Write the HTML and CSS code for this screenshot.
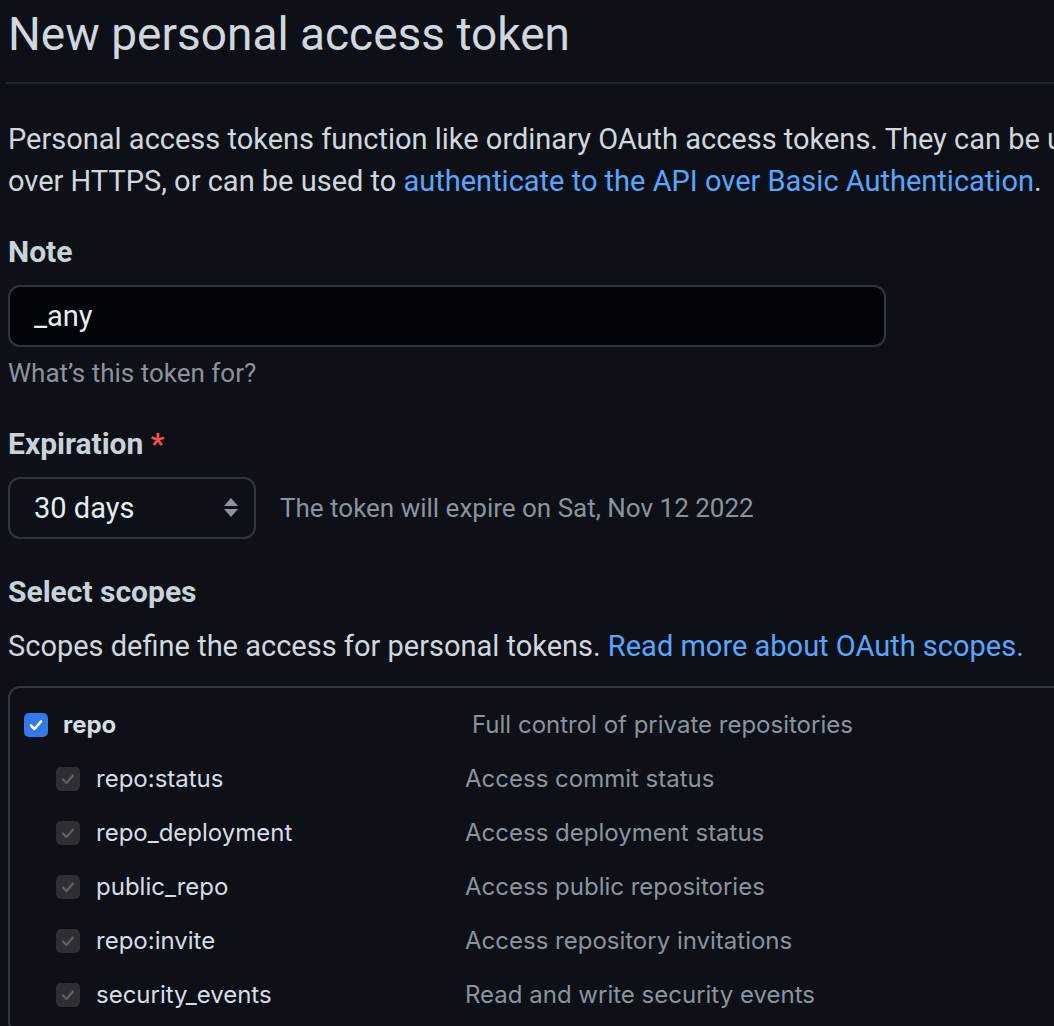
FILE: index.html
```html
<!DOCTYPE html>
<html lang="en">
<head>
<meta charset="utf-8">
<title>New personal access token</title>
<link rel="stylesheet" href="styles.css">
</head>
<body>
<main class="page">
  <div class="subhead">
    <h1 class="title">New personal access token</h1>
  </div>

  <p class="intro">Personal access tokens function like ordinary OAuth access tokens. They can be used instead of a password for Git<br>over HTTPS, or can be used to <a href="#" class="link">authenticate to the API over Basic Authentication</a>.</p>

  <div class="field">
    <label class="label">Note</label>
    <div class="input">_any</div>
    <p class="note">What’s this token for?</p>
  </div>

  <div class="field">
    <label class="label">Expiration <span class="req">*</span></label>
    <div class="exp-row">
      <div class="select">
        <span>30 days</span>
        <svg class="arrows" width="14" height="20" viewBox="0 0 14 20"><path d="M7 0 L14 8 L0 8 Z" fill="#8b949e"/><path d="M0 11 L14 11 L7 19 Z" fill="#8b949e"/></svg>
      </div>
      <span class="exp-text">The token will expire on Sat, Nov 12 2022</span>
    </div>
  </div>

  <div class="field field-scopes">
    <label class="label">Select scopes</label>
    <p class="scopes-desc">Scopes define the access for personal tokens. <a href="#" class="link">Read more about OAuth scopes.</a></p>
  </div>

  <div class="scopes">
    <div class="row parent">
      <span class="cb cb-on"><svg width="16" height="16" viewBox="0 0 16 16"><path d="M3 8.5 L6.5 12 L13 4.5" fill="none" stroke="#fff" stroke-width="2.6" stroke-linecap="round" stroke-linejoin="round"/></svg></span>
      <span class="name bold">repo</span>
      <span class="desc">Full control of private repositories</span>
    </div>
    <div class="row child">
      <span class="cb cb-dis"><svg width="16" height="16" viewBox="0 0 16 16"><path d="M3 8.5 L6.5 12 L13 4.5" fill="none" stroke="#5d6168" stroke-width="2.2" stroke-linecap="round" stroke-linejoin="round"/></svg></span>
      <span class="name">repo:status</span>
      <span class="desc">Access commit status</span>
    </div>
    <div class="row child">
      <span class="cb cb-dis"><svg width="16" height="16" viewBox="0 0 16 16"><path d="M3 8.5 L6.5 12 L13 4.5" fill="none" stroke="#5d6168" stroke-width="2.2" stroke-linecap="round" stroke-linejoin="round"/></svg></span>
      <span class="name">repo_deployment</span>
      <span class="desc">Access deployment status</span>
    </div>
    <div class="row child">
      <span class="cb cb-dis"><svg width="16" height="16" viewBox="0 0 16 16"><path d="M3 8.5 L6.5 12 L13 4.5" fill="none" stroke="#5d6168" stroke-width="2.2" stroke-linecap="round" stroke-linejoin="round"/></svg></span>
      <span class="name">public_repo</span>
      <span class="desc">Access public repositories</span>
    </div>
    <div class="row child">
      <span class="cb cb-dis"><svg width="16" height="16" viewBox="0 0 16 16"><path d="M3 8.5 L6.5 12 L13 4.5" fill="none" stroke="#5d6168" stroke-width="2.2" stroke-linecap="round" stroke-linejoin="round"/></svg></span>
      <span class="name">repo:invite</span>
      <span class="desc">Access repository invitations</span>
    </div>
    <div class="row child">
      <span class="cb cb-dis"><svg width="16" height="16" viewBox="0 0 16 16"><path d="M3 8.5 L6.5 12 L13 4.5" fill="none" stroke="#5d6168" stroke-width="2.2" stroke-linecap="round" stroke-linejoin="round"/></svg></span>
      <span class="name">security_events</span>
      <span class="desc">Read and write security events</span>
    </div>
  </div>
</main>
</body>
</html>
```
FILE: styles.css
```css
html, body {
  margin: 0;
  padding: 0;
  background: #0d1117;
  overflow: hidden;
}
body {
  font-family: Roboto, "Liberation Sans", sans-serif;
  color: #c9d1d9;
  font-size: 29px;
  line-height: 42px;
}
.page {
  padding-left: 8px;
  width: 1300px;
}
.subhead {
  border-bottom: 2px solid #21262d;
  margin-left: -2px;
  padding-left: 2px;
  padding-bottom: 14px;
}
.title {
  margin: 0;
  font-size: 46px;
  font-weight: 400;
  line-height: 68px;
  color: #d0d7de;
}
.intro {
  margin: 34px 0 0;
  white-space: nowrap;
  color: #d0d7de;
}
.link {
  color: #58a6ff;
  text-decoration: none;
}
.field {
  margin-top: 29px;
}
.field-scopes {
  margin-top: 32px;
}
.label {
  display: block;
  font-size: 30px;
  font-weight: 700;
  color: #c9d1d9;
}
.req {
  color: #f85149;
}
.input {
  margin-top: 12px;
  width: 850px;
  height: 58px;
  border: 2px solid #30363d;
  border-radius: 12px;
  background: #010409;
  padding-left: 24px;
  line-height: 58px;
  color: #e6edf3;
}
.note {
  margin: 5px 0 0;
  font-size: 26px;
  color: #8b949e;
}
.exp-row {
  margin-top: 12px;
  display: flex;
  align-items: center;
  gap: 24px;
}
.select {
  width: 220px;
  height: 58px;
  border: 2px solid #30363d;
  border-radius: 12px;
  padding-left: 24px;
  display: flex;
  align-items: center;
  justify-content: space-between;
  color: #e6edf3;
}
.arrows {
  margin-right: 16px;
}
.exp-text {
  font-size: 26px;
  color: #8b949e;
}
.scopes-desc {
  margin: 12px 0 0;
  color: #d0d7de;
}
.scopes {
  margin-top: 19px;
  width: 1200px;
  border: 2px solid #30363d;
  border-radius: 12px;
  padding: 10px 0 10px 14px;
  font-family: Inter, "Noto Sans", sans-serif;
  font-size: 24px;
}
.row {
  display: flex;
  align-items: center;
  height: 54px;
}
.child {
  padding-left: 32px;
}
.cb {
  width: 24px;
  height: 24px;
  border-radius: 5px;
  display: flex;
  align-items: center;
  justify-content: center;
  flex: none;
}
.cb-on {
  background: #3478ea;
}
.cb-dis {
  background: #2d2f34;
}
.name {
  margin-left: 16px;
  width: 369px;
  color: #d7dde5;
}
.bold {
  font-weight: 700;
  margin-left: 15px;
  width: 409px;
}
.desc {
  color: #8b949e;
}
```
